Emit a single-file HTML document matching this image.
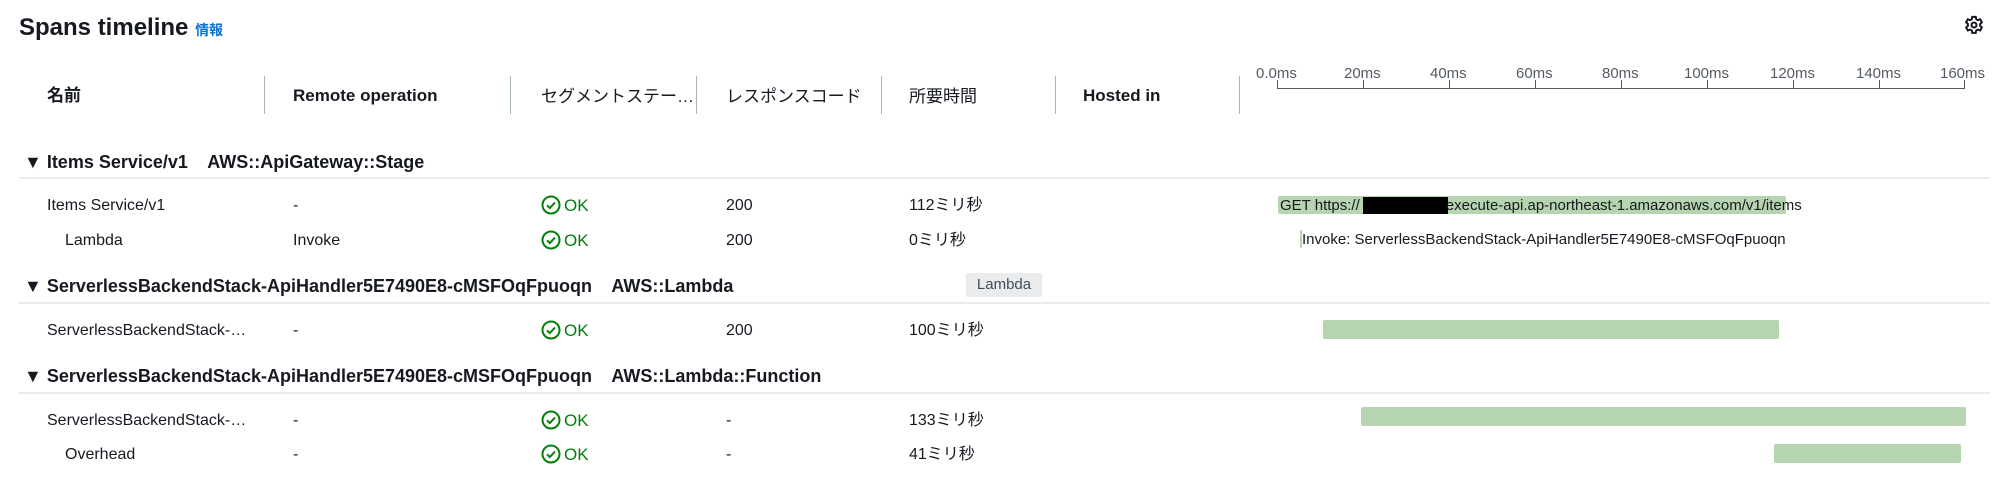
<!DOCTYPE html>
<html><head><meta charset="utf-8"><style>
*{margin:0;padding:0;box-sizing:border-box}
body{width:2000px;height:500px;background:#fff;position:relative;overflow:hidden;font-family:"Liberation Sans","Noto Sans CJK JP",sans-serif;color:#16191f;font-size:16px}
.a{position:absolute;white-space:nowrap;line-height:1}
.h{font-weight:bold;font-size:17px}
.g{font-weight:bold;font-size:18px}
.sep{position:absolute;top:76px;width:1px;height:38px;background:#aab7b8}
.div{position:absolute;left:19px;width:1971px;height:2px;background:#e9ebed}
.ok{position:absolute;color:#037f0c;font-size:17px;line-height:1;white-space:nowrap}
.ok svg{vertical-align:-4px;margin-right:3px}
.bar{position:absolute;background:#b7d4b0;border-radius:2px}
.tick{position:absolute;top:80px;width:1px;height:9px;background:#545b64}
.tl{position:absolute;top:66px;font-size:15px;color:#545b64;line-height:1}
.j{margin-top:0}
</style></head><body>
<div class="a" style="left:19px;top:16px;font-size:24px;font-weight:bold">Spans timeline <span style="font-size:14px;color:#0972d3;font-weight:bold">情報</span></div>
<svg class="a" style="left:1964px;top:15px" width="20" height="20" viewBox="0 0 16 16" fill="none" stroke="#16191f" stroke-width="1.6"><path d="M6.6 1.5h2.8l.4 1.9 1.3.7 1.8-.7 1.4 2.4-1.4 1.3v1.6l1.4 1.3-1.4 2.4-1.8-.7-1.3.7-.4 1.9H6.6l-.4-1.9-1.3-.7-1.8.7-1.4-2.4 1.4-1.3V7.1L1.7 5.8l1.4-2.4 1.8.7 1.3-.7z"/><circle cx="8" cy="8" r="2"/></svg>

<div class="a h" style="left:47px;top:87px">名前</div>
<div class="sep" style="left:264px"></div>
<div class="a h" style="left:293px;top:87px">Remote operation</div>
<div class="sep" style="left:510px"></div>
<div class="a h" style="left:541px;top:88px;font-weight:normal">セグメントステー…</div>
<div class="sep" style="left:696px"></div>
<div class="a h" style="left:726px;top:88px;font-weight:normal">レスポンスコード</div>
<div class="sep" style="left:881px"></div>
<div class="a h" style="left:909px;top:88px;font-weight:normal">所要時間</div>
<div class="sep" style="left:1055px"></div>
<div class="a h" style="left:1083px;top:87px">Hosted in</div>
<div class="sep" style="left:1239px"></div>

<div style="position:absolute;left:1277px;top:88px;width:688px;height:1px;background:#545b64"></div>
<div class="tick" style="left:1277px"></div><div class="tl" style="left:1256px">0.0ms</div>
<div class="tick" style="left:1363px"></div><div class="tl" style="left:1344px">20ms</div>
<div class="tick" style="left:1449px"></div><div class="tl" style="left:1430px">40ms</div>
<div class="tick" style="left:1535px"></div><div class="tl" style="left:1516px">60ms</div>
<div class="tick" style="left:1621px"></div><div class="tl" style="left:1602px">80ms</div>
<div class="tick" style="left:1707px"></div><div class="tl" style="left:1684px">100ms</div>
<div class="tick" style="left:1793px"></div><div class="tl" style="left:1770px">120ms</div>
<div class="tick" style="left:1879px"></div><div class="tl" style="left:1856px">140ms</div>
<div class="tick" style="left:1964px"></div><div class="tl" style="left:1940px">160ms</div>

<!-- group1 -->
<div class="a g" style="left:24px;top:153px">▼ Items Service/v1&nbsp;&nbsp;&nbsp; AWS::ApiGateway::Stage</div>
<div class="div" style="top:177px"></div>
<div class="a" style="left:47px;top:198px">Items Service/v1</div>
<div class="a" style="left:293px;top:198px">-</div>
<div class="ok" style="left:541px;top:195px"><svg width="20" height="20" viewBox="0 0 20 20" fill="none" stroke="#037f0c" stroke-width="2"><circle cx="10" cy="10" r="8.5"/><path d="M6 10.3l2.8 2.8L14 7.5"/></svg>OK</div>
<div class="a" style="left:726px;top:198px">200</div>
<div class="a" style="left:909px;top:198px">112ミリ秒</div>
<div class="bar" style="left:1278px;top:196px;width:508px;height:18px"></div>
<div style="position:absolute;left:1363px;top:197px;width:85px;height:17px;background:#000"></div>
<div class="a" style="left:1280px;top:198px;font-size:15px">GET https://<span style="display:inline-block;width:86px"></span>execute-api.ap-northeast-1.amazonaws.com/v1/items</div>

<div class="a" style="left:65px;top:233px">Lambda</div>
<div class="a" style="left:293px;top:233px">Invoke</div>
<div class="ok" style="left:541px;top:230px"><svg width="20" height="20" viewBox="0 0 20 20" fill="none" stroke="#037f0c" stroke-width="2"><circle cx="10" cy="10" r="8.5"/><path d="M6 10.3l2.8 2.8L14 7.5"/></svg>OK</div>
<div class="a" style="left:726px;top:233px">200</div>
<div class="a" style="left:909px;top:233px">0ミリ秒</div>
<div class="bar" style="left:1300px;top:230px;width:2px;height:18px"></div>
<div class="a" style="left:1302px;top:232px;font-size:15px">Invoke: ServerlessBackendStack-ApiHandler5E7490E8-cMSFOqFpuoqn</div>

<!-- group2 -->
<div class="a g" style="left:24px;top:277px">▼ ServerlessBackendStack-ApiHandler5E7490E8-cMSFOqFpuoqn&nbsp;&nbsp;&nbsp; AWS::Lambda</div>
<div style="position:absolute;left:966px;top:273px;width:76px;height:24px;background:#e9ebed;border-radius:2px;font-size:15px;line-height:24px;text-align:center;color:#414d5c">Lambda</div>
<div class="div" style="top:302px"></div>
<div class="a" style="left:47px;top:323px">ServerlessBackendStack-…</div>
<div class="a" style="left:293px;top:323px">-</div>
<div class="ok" style="left:541px;top:320px"><svg width="20" height="20" viewBox="0 0 20 20" fill="none" stroke="#037f0c" stroke-width="2"><circle cx="10" cy="10" r="8.5"/><path d="M6 10.3l2.8 2.8L14 7.5"/></svg>OK</div>
<div class="a" style="left:726px;top:323px">200</div>
<div class="a" style="left:909px;top:323px">100ミリ秒</div>
<div class="bar" style="left:1323px;top:320px;width:456px;height:19px"></div>

<!-- group3 -->
<div class="a g" style="left:24px;top:367px">▼ ServerlessBackendStack-ApiHandler5E7490E8-cMSFOqFpuoqn&nbsp;&nbsp;&nbsp; AWS::Lambda::Function</div>
<div class="div" style="top:392px"></div>
<div class="a" style="left:47px;top:413px">ServerlessBackendStack-…</div>
<div class="a" style="left:293px;top:413px">-</div>
<div class="ok" style="left:541px;top:410px"><svg width="20" height="20" viewBox="0 0 20 20" fill="none" stroke="#037f0c" stroke-width="2"><circle cx="10" cy="10" r="8.5"/><path d="M6 10.3l2.8 2.8L14 7.5"/></svg>OK</div>
<div class="a" style="left:726px;top:413px">-</div>
<div class="a" style="left:909px;top:413px">133ミリ秒</div>
<div class="bar" style="left:1361px;top:407px;width:605px;height:19px"></div>

<div class="a" style="left:65px;top:447px">Overhead</div>
<div class="a" style="left:293px;top:447px">-</div>
<div class="ok" style="left:541px;top:444px"><svg width="20" height="20" viewBox="0 0 20 20" fill="none" stroke="#037f0c" stroke-width="2"><circle cx="10" cy="10" r="8.5"/><path d="M6 10.3l2.8 2.8L14 7.5"/></svg>OK</div>
<div class="a" style="left:726px;top:447px">-</div>
<div class="a" style="left:909px;top:447px">41ミリ秒</div>
<div class="bar" style="left:1774px;top:444px;width:187px;height:19px"></div>
</body></html>
